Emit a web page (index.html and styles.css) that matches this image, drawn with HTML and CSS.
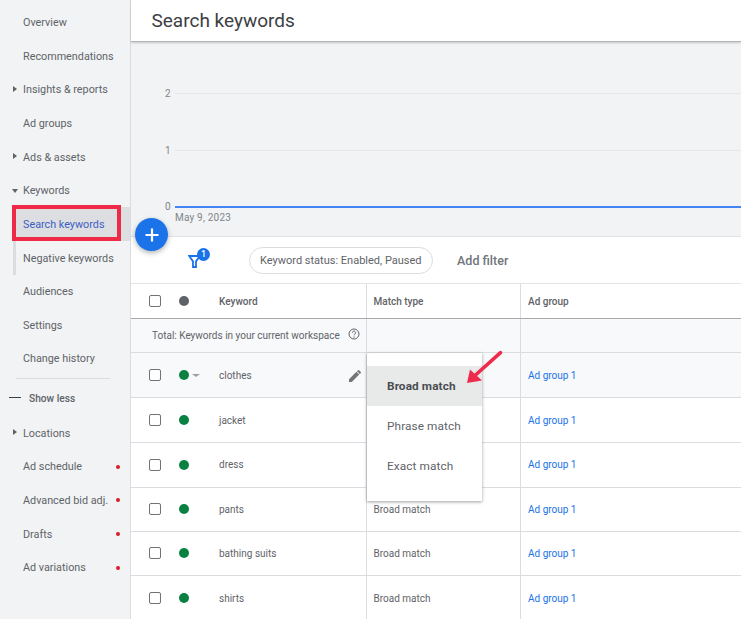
FILE: index.html
```html
<!DOCTYPE html>
<html lang="en">
<head>
<meta charset="utf-8">
<title>Search keywords</title>
<link rel="stylesheet" href="styles.css">
</head>
<body>
<div class="app">
  <nav class="sidebar">
    <div class="nav-item"><span class="nav-label">Overview</span></div>
    <div class="nav-item"><span class="nav-label">Recommendations</span></div>
    <div class="nav-item"><span class="caret caret-right"></span><span class="nav-label">Insights &amp; reports</span></div>
    <div class="nav-item"><span class="nav-label">Ad groups</span></div>
    <div class="nav-item"><span class="caret caret-right"></span><span class="nav-label">Ads &amp; assets</span></div>
    <div class="nav-item"><span class="caret caret-down"></span><span class="nav-label">Keywords</span></div>
    <div class="nav-item nav-active"><span class="nav-label">Search keywords</span></div>
    <div class="nav-item nav-sub"><span class="nav-label">Negative keywords</span></div>
    <div class="nav-item"><span class="nav-label">Audiences</span></div>
    <div class="nav-item"><span class="nav-label">Settings</span></div>
    <div class="nav-item"><span class="nav-label">Change history</span></div>
    <div class="nav-rule"></div>
    <div class="nav-item nav-less"><span class="dash"></span><span class="less-label">Show less</span></div>
    <div class="nav-item"><span class="caret caret-right"></span><span class="nav-label">Locations</span></div>
    <div class="nav-item"><span class="nav-label">Ad schedule</span><span class="red-dot"></span></div>
    <div class="nav-item"><span class="nav-label">Advanced bid adj.</span><span class="red-dot"></span></div>
    <div class="nav-item"><span class="nav-label">Drafts</span><span class="red-dot"></span></div>
    <div class="nav-item"><span class="nav-label">Ad variations</span><span class="red-dot"></span></div>
  </nav>

  <main class="main">
    <header class="page-head"><h1 class="page-title">Search keywords</h1></header>

    <section class="chart">
      <div class="chart-row"><span class="tick">2</span><span class="grid-line"></span></div>
      <div class="chart-row"><span class="tick">1</span><span class="grid-line"></span></div>
      <div class="chart-row chart-base"><span class="tick">0</span><span class="base-line"></span></div>
      <div class="chart-date">May 9, 2023</div>
    </section>

    <section class="filters">
      <span class="filter-icon">
        <svg width="13" height="13" viewBox="0 0 13 13" aria-hidden="true"><path d="M1.200 1h10.600L8 6.400V12H5V6.400z" fill="none" stroke="#1a73e8" stroke-width="1.800"/></svg>
        <span class="filter-badge">1</span>
      </span>
      <span class="chip">Keyword status: Enabled, Paused</span>
      <span class="add-filter">Add filter</span>
    </section>

    <section class="table">
      <div class="row head-row">
        <div class="cell cell-kw"><span class="check"></span><span class="dot dot-grey"></span><span class="kw-text">Keyword</span></div>
        <div class="cell cell-match">Match type</div>
        <div class="cell cell-group">Ad group</div>
      </div>
      <div class="row total-row">
        <div class="cell cell-kw total-cell">Total: Keywords in your current workspace
          <svg class="help" width="12" height="12" viewBox="0 0 12 12" aria-hidden="true"><circle cx="6" cy="6" r="5" fill="none" stroke="#5f6368"/><path d="M4.400 4.700a1.600 1.600 0 1 1 2.500 1.300c-.6.4-.9.7-.9 1.300" fill="none" stroke="#5f6368"/><circle cx="6" cy="8.900" r=".6" fill="#5f6368"/></svg>
        </div>
        <div class="cell cell-match"></div>
        <div class="cell cell-group"></div>
      </div>
      <div class="row row-a hover-row">
        <div class="cell cell-kw"><span class="check"></span><span class="dot"></span><span class="dot-caret"></span><span class="kw-text kw-first">clothes</span>
          <svg class="pencil" width="14" height="14" viewBox="0 0 14 14" aria-hidden="true"><path d="M1 10.200V13h2.800l7.400-7.400-2.800-2.800zM12.800 4a.8.8 0 0 0 0-1.100L11.100 1.200a.8.8 0 0 0-1.100 0L9 2.200 11.800 5z" fill="#757575"/></svg>
        </div>
        <div class="cell cell-match"></div>
        <div class="cell cell-group"><a class="link">Ad group 1</a></div>
      </div>
      <div class="row row-a">
        <div class="cell cell-kw"><span class="check"></span><span class="dot"></span><span class="kw-text">jacket</span></div>
        <div class="cell cell-match"></div>
        <div class="cell cell-group"><a class="link">Ad group 1</a></div>
      </div>
      <div class="row row-b">
        <div class="cell cell-kw"><span class="check"></span><span class="dot"></span><span class="kw-text">dress</span></div>
        <div class="cell cell-match"></div>
        <div class="cell cell-group"><a class="link">Ad group 1</a></div>
      </div>
      <div class="row row-c">
        <div class="cell cell-kw"><span class="check"></span><span class="dot"></span><span class="kw-text">pants</span></div>
        <div class="cell cell-match">Broad match</div>
        <div class="cell cell-group"><a class="link">Ad group 1</a></div>
      </div>
      <div class="row row-c">
        <div class="cell cell-kw"><span class="check"></span><span class="dot"></span><span class="kw-text">bathing suits</span></div>
        <div class="cell cell-match">Broad match</div>
        <div class="cell cell-group"><a class="link">Ad group 1</a></div>
      </div>
      <div class="row row-last">
        <div class="cell cell-kw"><span class="check"></span><span class="dot"></span><span class="kw-text">shirts</span></div>
        <div class="cell cell-match">Broad match</div>
        <div class="cell cell-group"><a class="link">Ad group 1</a></div>
      </div>
    </section>
  </main>
</div>

<div class="fab">
  <svg width="16" height="16" viewBox="0 0 16 16" aria-hidden="true"><path d="M8 1.500v13M1.500 8h13" stroke="#fff" stroke-width="2.200"/></svg>
</div>

<div class="highlight-box"></div>

<div class="menu">
  <div class="menu-item menu-selected">Broad match</div>
  <div class="menu-item">Phrase match</div>
  <div class="menu-item">Exact match</div>
</div>

<svg class="arrow" width="40" height="38" viewBox="0 0 40 38" aria-hidden="true">
  <path d="M35.500 4.700 10 27.500" stroke="#ef2b4b" stroke-width="3.600" stroke-linecap="round"/>
  <path d="M2 35l3-13.500 12 11z" fill="#ef2b4b"/>
</svg>
</body>
</html>
```
FILE: styles.css
```css
* { box-sizing: border-box; }
html, body { margin: 0; padding: 0; height: 100%; overflow: hidden; }
body {
  position: relative;
  width: 741px;
  height: 619px;
  font-family: Roboto, "Liberation Sans", sans-serif;
  font-size: 10.500px;
  color: #5f6368;
  background: #fff;
}
.app { display: flex; height: 619px; }

/* Sidebar */
.sidebar {
  width: 131px;
  flex: none;
  padding-top: 5.900px;
  background: #f1f3f4;
  border-right: 1px solid #dadce0;
  display: flex;
  flex-direction: column;
}
.nav-item {
  position: relative;
  height: 33.600px;
  flex: none;
  display: flex;
  align-items: center;
  padding-left: 23px;
  font-size: 10.800px;
  color: #5f6368;
  white-space: nowrap;
}
.nav-label { display: block; }
.nav-active { margin-left: 13px; padding-left: 10px; background: #dcdee1; color: #3c5ec4; }
.nav-sub { padding-top: 1px; }
.nav-sub::before {
  content: "";
  position: absolute;
  left: 13px;
  top: 0;
  bottom: 0;
  width: 3px;
  background: #dadce0;
}
.caret { position: absolute; width: 0; height: 0; }
.caret-right {
  left: 13px;
  top: 13px;
  border-top: 3.500px solid transparent;
  border-bottom: 3.500px solid transparent;
  border-left: 4px solid #5f6368;
}
.caret-down {
  left: 12px;
  top: 15px;
  border-left: 3.500px solid transparent;
  border-right: 3.500px solid transparent;
  border-top: 4px solid #5f6368;
}
.nav-rule {
  flex: none;
  height: 1px;
  margin: 3px 20px 0 16px;
  background: #dadce0;
}
.nav-less { height: 37px; padding-top: 2px; padding-left: 9px; }
.dash { width: 12px; height: 1.500px; background: #3c4043; flex: none; margin: -3px 8px 0 0; }
.less-label { font-size: 10.200px; font-weight: 500; color: #5f6368; }
.red-dot {
  position: absolute;
  left: 116px;
  top: 50%;
  width: 4px;
  height: 4px;
  margin-top: -2px;
  border-radius: 50%;
  background: #d3202c;
}

/* Main */
.main { flex: 1; min-width: 0; display: flex; flex-direction: column; }
.page-head {
  height: 42px;
  flex: none;
  padding-left: 20.500px;
  display: flex;
  align-items: center;
  background: #fff;
  border-bottom: 1px solid #b5b6b8;
  box-shadow: 0 1px 2px rgba(60, 64, 67, .25);
  position: relative;
}
.page-title { margin: 0; font-size: 19px; font-weight: 400; color: #3c4043; }

.chart {
  height: 195px;
  flex: none;
  padding: 23.500px 0 0 34px;
  background: #f1f3f4;
  border-bottom: 1px solid #e0e2e5;
}
.chart-row { height: 56.600px; display: flex; align-items: center; }
.chart-base { height: 0; margin-top: 28.300px; }
.tick { width: 10px; font-size: 10px; color: #80868b; flex: none; }
.grid-line { flex: 1; height: 1px; background: #e6e7e9; }
.base-line { flex: 1; height: 2px; background: #4285f4; }
.chart-date { margin: 5px 0 0 10px; font-size: 10px; letter-spacing: .2px; color: #80868b; }

.filters {
  height: 47px;
  flex: none;
  display: flex;
  align-items: center;
  border-bottom: 1px solid #e3e4e6;
  padding-left: 57px;
}
.filter-icon { position: relative; width: 13px; height: 13px; display: block; margin-top: 3px; }
.filter-icon svg { display: block; }
.filter-badge {
  position: absolute;
  left: 9px;
  top: -7px;
  width: 13px;
  height: 13px;
  border-radius: 50%;
  background: #1a73e8;
  color: #fff;
  font-size: 9px;
  font-weight: 500;
  line-height: 13px;
  text-align: center;
}
.chip {
  margin-left: 48px;
  height: 27px;
  padding: 0 10px;
  display: flex;
  align-items: center;
  border: 1px solid #dadce0;
  border-radius: 14px;
  font-size: 11px;
  color: #5f6368;
  white-space: nowrap;
}
.add-filter { margin-left: 24.500px; font-size: 12.500px; font-weight: 500; color: #70757a; }

/* Table */
.table { flex: 1; min-height: 0; }
.row { display: flex; border-bottom: 1px solid #dadce0; }
.head-row { height: 35px; border-bottom-color: #a6a8ab; }
.total-row { height: 34px; background: #f8f9fa; }
.row-a { height: 45px; }
.row-b { height: 44.500px; }
.row-c { height: 44px; }
.row-last { height: 46px; }
.hover-row { background: #f8f9fa; }
.cell {
  display: flex;
  align-items: center;
  height: 100%;
  font-size: 10px;
  color: #5f6368;
  white-space: nowrap;
}
.cell-kw { width: 235px; flex: none; padding-left: 18px; position: relative; }
.cell-match { width: 154px; flex: none; padding-left: 6.500px; border-left: 1px solid #dadce0; }
.cell-group { flex: 1; padding-left: 7px; border-left: 1px solid #dadce0; }
.head-row .cell { font-weight: 500; }
.check {
  width: 12px;
  height: 12px;
  flex: none;
  border: 1.300px solid #6f7276;
  border-radius: 2px;
  background: #fff;
}
.dot { width: 10px; height: 10px; flex: none; border-radius: 50%; background: #0b8043; margin-left: 17.500px; }
.dot-grey { background: #5f6368; }
.dot-caret {
  position: absolute;
  left: 61px;
  top: 50%;
  margin-top: -1px;
  border-left: 4px solid transparent;
  border-right: 4px solid transparent;
  border-top: 3.500px solid #9aa0a6;
}
.kw-text { margin-left: 30.500px; }
.total-cell { padding-left: 21px; gap: 8px; }
.help { flex: none; margin-top: -3px; }
.pencil { position: absolute; left: 217px; top: 50%; margin-top: -6px; }
.link { color: #1a73e8; font-size: 10px; }

/* Overlays */
.fab {
  position: absolute;
  left: 135px;
  top: 218px;
  width: 33px;
  height: 33px;
  border-radius: 50%;
  background: #1a73e8;
  display: flex;
  align-items: center;
  justify-content: center;
  box-shadow: 0 2px 5px rgba(60, 64, 67, .4);
}
.highlight-box {
  position: absolute;
  left: 12px;
  top: 205px;
  width: 109px;
  height: 36px;
  border: 4px solid #ee2a47;
}
.menu {
  position: absolute;
  left: 367px;
  top: 353px;
  width: 115px;
  height: 148px;
  padding-top: 13px;
  background: #fff;
  box-shadow: 0 1px 3px rgba(60, 64, 67, .5);
}
.menu-item {
  height: 40px;
  padding-left: 20px;
  display: flex;
  align-items: center;
  font-size: 11.800px;
  color: #5f6368;
  letter-spacing: .1px;
}
.menu-selected { background: #e8eaea; font-weight: 700; color: #4a4d51; }
.arrow { position: absolute; left: 465px; top: 348px; }
```
